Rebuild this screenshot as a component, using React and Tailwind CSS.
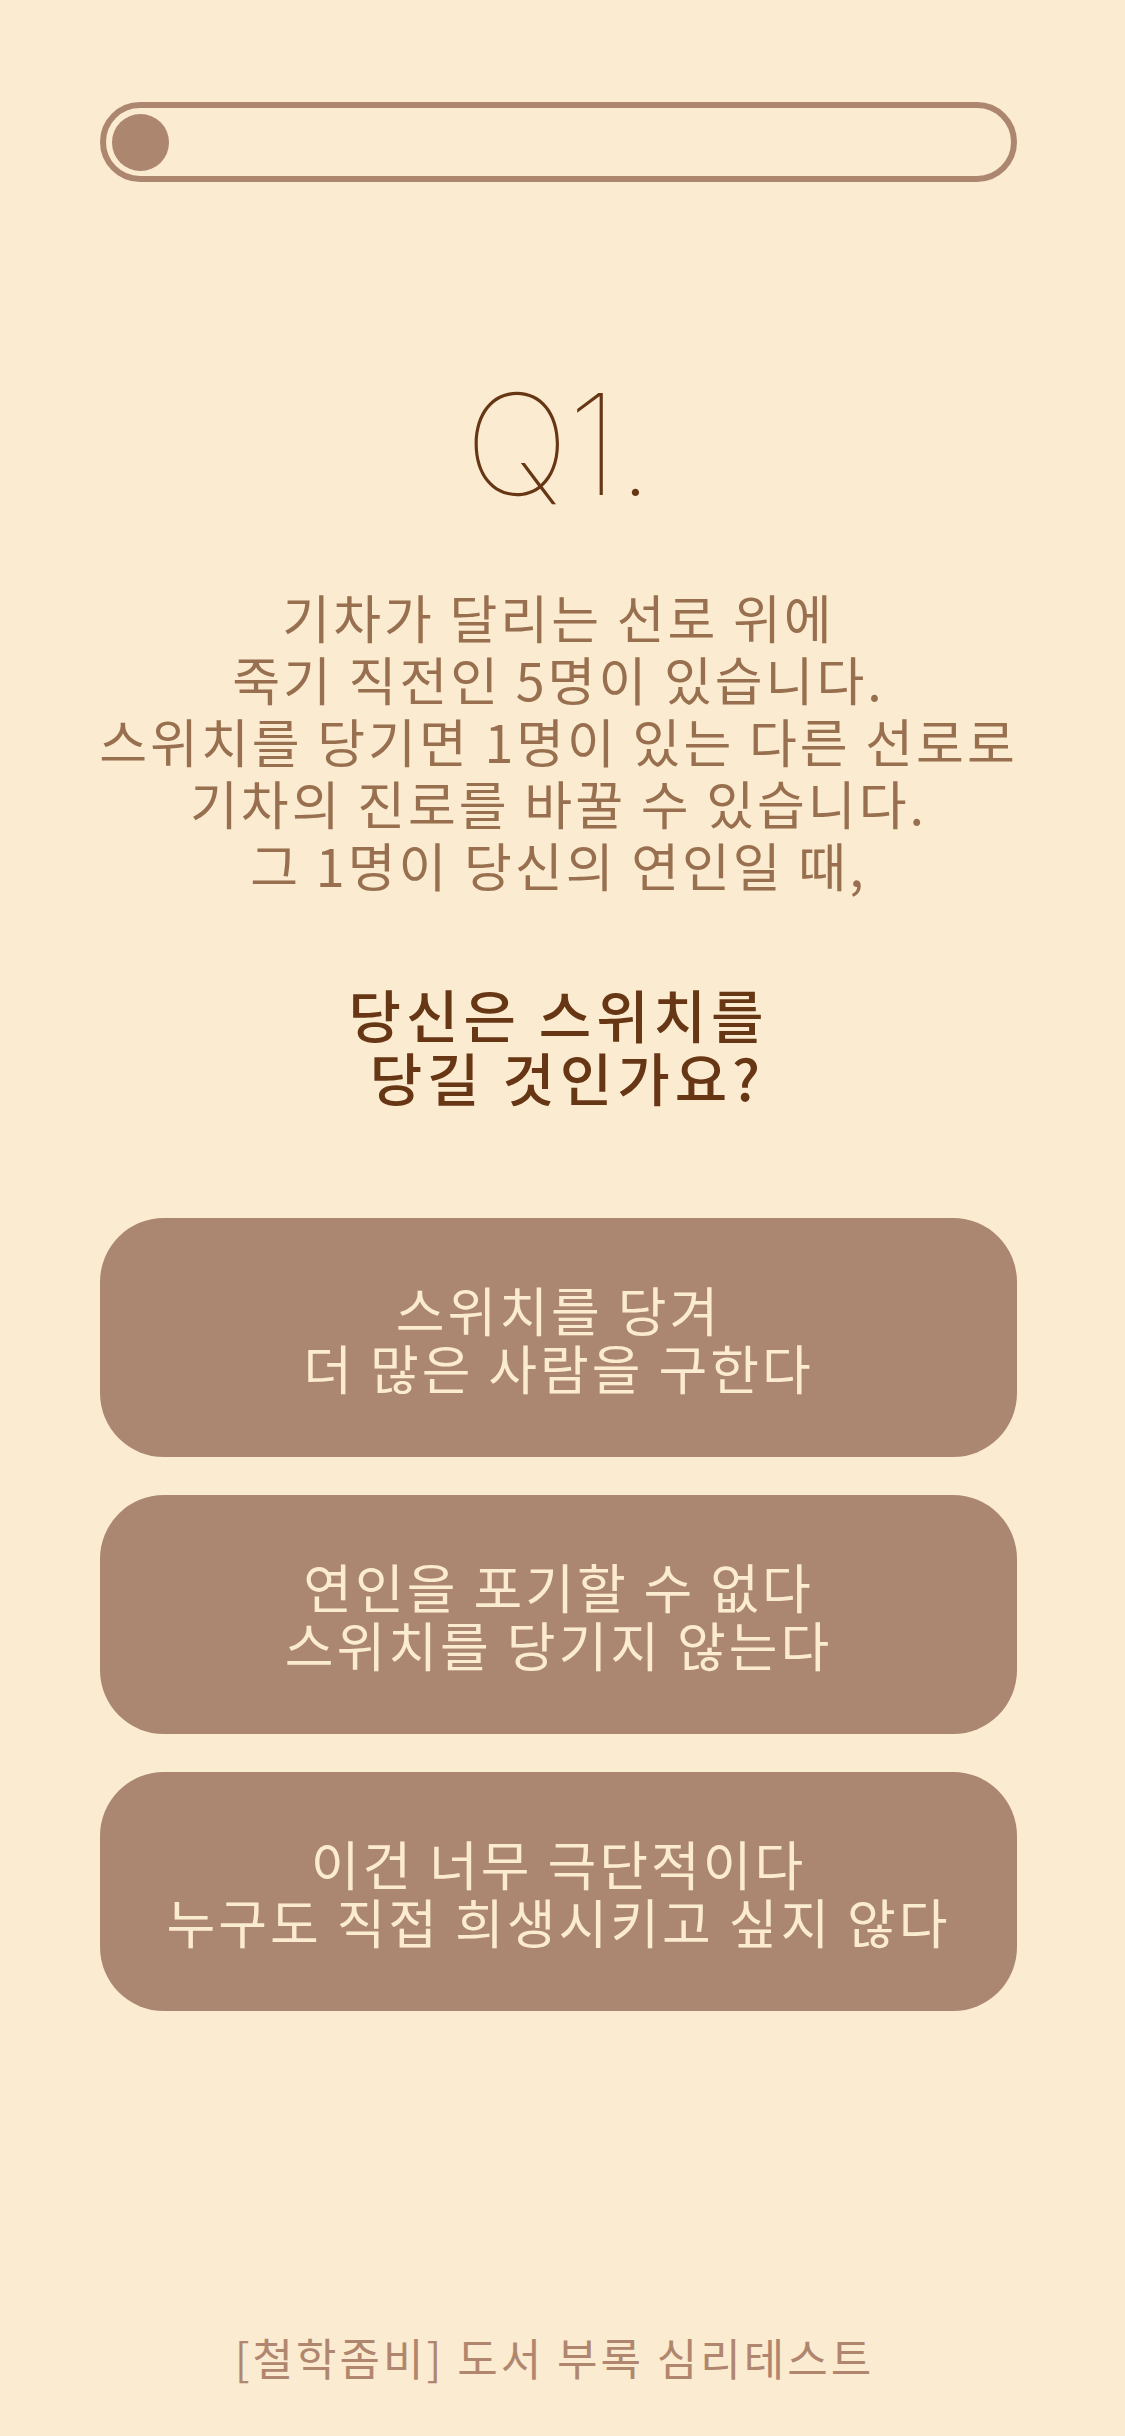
import React from 'react';

const KR = { fontFamily: '"Noto Sans CJK KR", "Noto Sans", sans-serif' };

const options = [
  ['스위치를 당겨', '더 많은 사람을 구한다'],
  ['연인을 포기할 수 없다', '스위치를 당기지 않는다'],
  ['이건 너무 극단적이다', '누구도 직접 희생시키고 싶지 않다'],
];

const App = () => {
  return (
    <div className="flex min-h-screen w-full flex-col items-center bg-[#fbebd0] pr-[8px]" style={KR}>
      {/* progress */}
      <div className="mt-[102px] flex h-[80px] w-[917px] items-center rounded-full border-[6px] border-[#ad8670] pl-[6px]">
        <div className="h-[57px] w-[57px] rounded-full bg-[#ad8670]" />
      </div>

      <h1
        className="mt-[192px] text-[140px] font-thin leading-none tracking-[-2px] text-[#673614]"
        style={{ fontFamily: 'Inter, "Liberation Sans", sans-serif' }}
      >
        Q1.
      </h1>

      <p className="mt-[72px] text-center text-[52px] leading-[62px] tracking-[3px] text-[#98704f]">
        기차가 달리는 선로 위에
        <br />
        죽기 직전인 5명이 있습니다.
        <br />
        스위치를 당기면 1명이 있는 다른 선로로
        <br />
        기차의 진로를 바꿀 수 있습니다.
        <br />
        그 1명이 당신의 연인일 때,
      </p>

      <p className="mt-[86px] text-center text-[57px] font-medium leading-[63px] tracking-[5px] text-[#673614]">
        당신은 스위치를
        <br />
        &nbsp;당길 것인가요?
      </p>

      <div className="mt-[110px] flex w-[917px] flex-col gap-[38px]">
        {options.map(([a, b]) => (
          <button
            key={a}
            className="flex h-[239px] w-full items-center justify-center rounded-[64px] bg-[#ab8670] text-center text-[53px] leading-[58px] tracking-[3px] text-[#fbebd0]"
          >
            <span>
              {a}
              <br />
              {b}
            </span>
          </button>
        ))}
      </div>

      <p className="mt-[324px] pr-[8px] text-[44px] leading-none tracking-[3px] text-[#b0876e]">
        [철학좀비] 도서 부록 심리테스트
      </p>
    </div>
  );
};

export default App;
